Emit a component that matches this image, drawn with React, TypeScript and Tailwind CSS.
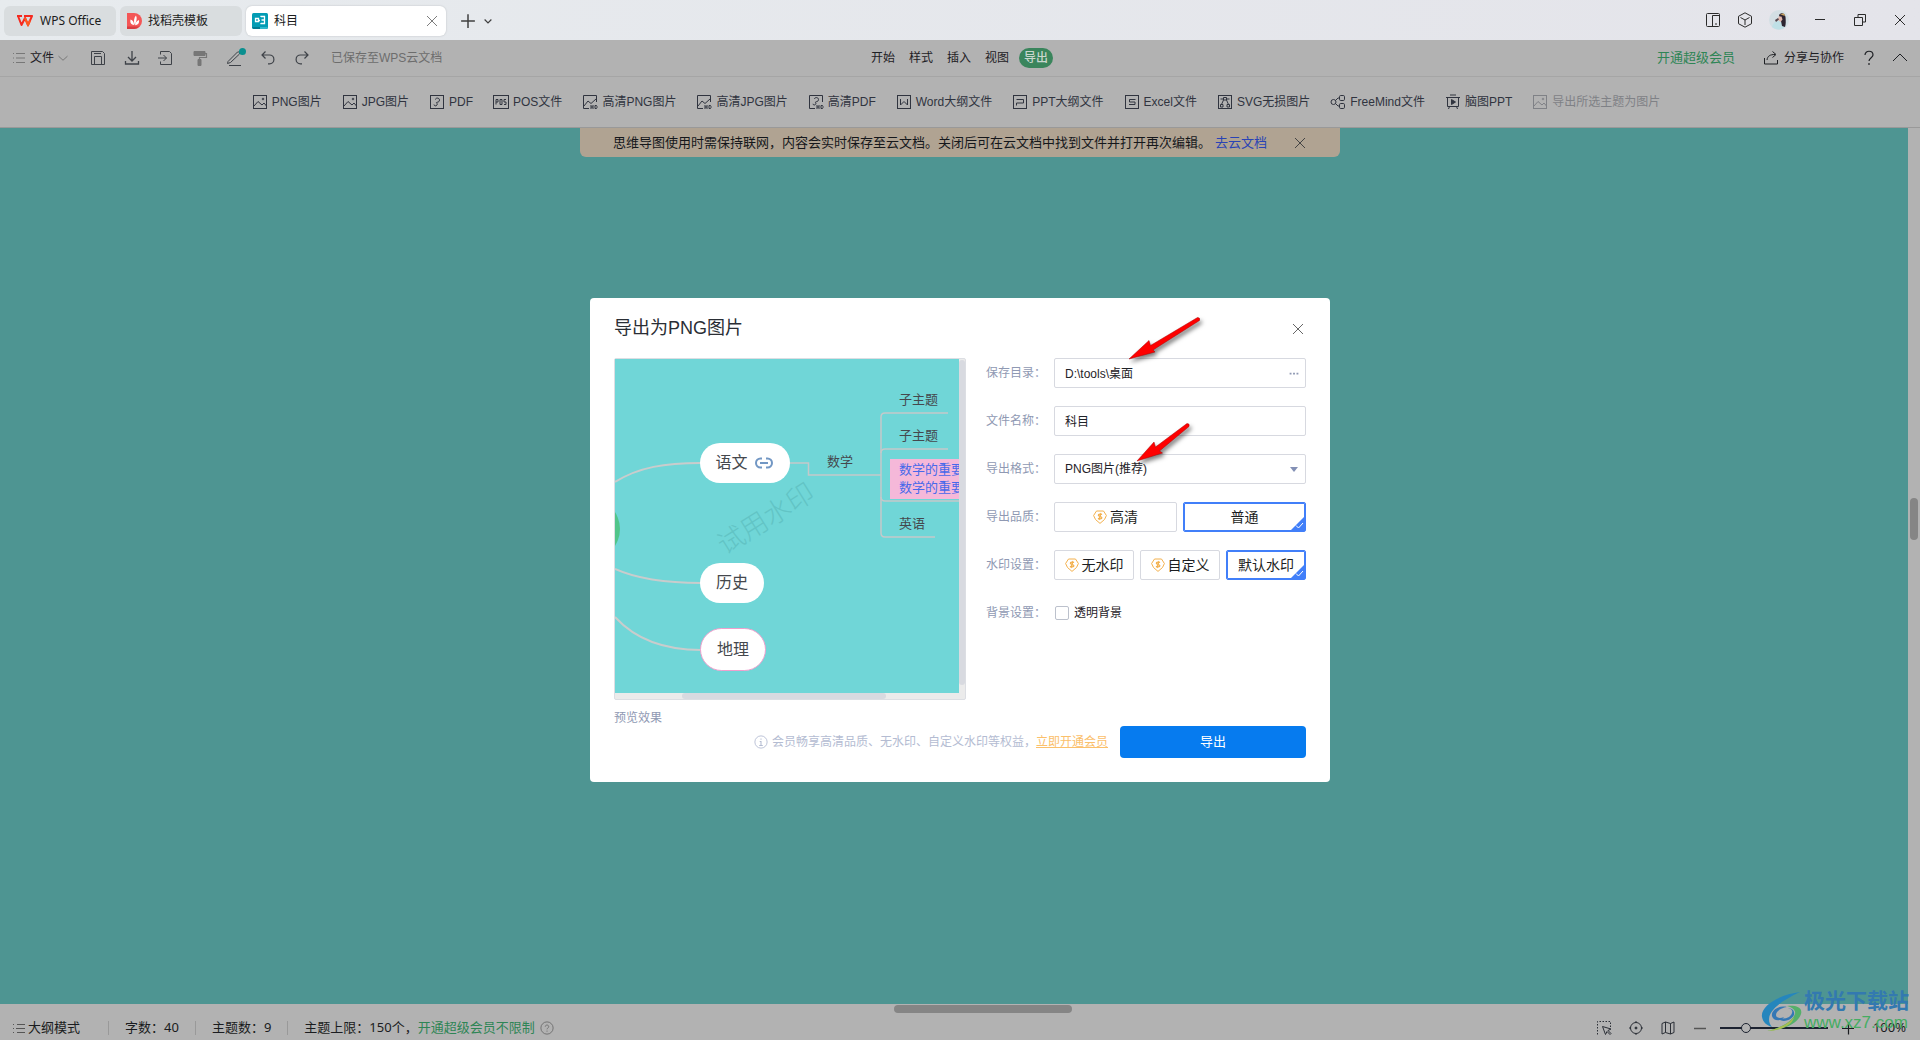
import React, { useState } from 'react';

interface IconProps {
  className?: string;
  size?: number;
  children: React.ReactNode;
}

const Icon: React.FC<IconProps> = ({ className = '', size = 16, children }) => (
  <svg
    width={size}
    height={size}
    viewBox="0 0 16 16"
    fill="none"
    stroke="currentColor"
    strokeWidth="1"
    className={`shrink-0 ${className}`}
    aria-hidden="true"
  >
    {children}
  </svg>
);

const Close: React.FC<{ className?: string }> = ({ className }) => (
  <Icon className={className}>
    <path d="M3 3l10 10M13 3L3 13" />
  </Icon>
);

// Toolbar glyphs
const glyphs: Record<string, React.ReactNode> = {
  image: (
    <>
      <rect x="1.5" y="1.5" width="13" height="13" />
      <path d="M2 12l4-4.500 4 3.500 2-2 2.500 3" />
      <circle cx="11" cy="5" r="0.8" />
    </>
  ),
  pdf: (
    <>
      <rect x="1.5" y="1.5" width="13" height="13" />
      <path d="M6.500 5.500c0-2 4-2 4 .5S8 8 7.500 8.500s1.500 1 .5 2.500-3 1-3-.5" />
    </>
  ),
  pos: (
    <>
      <rect x="0.500" y="1.500" width="15" height="13" />
      <path d="M3 10.500v-5h2v2.500H3M7 5.500h2v5H7zM13 5.500h-2V8h2v2.500h-2" />
    </>
  ),
  hd: (
    <>
      <path d="M7 14.500H1.500v-13h13V8" />
      <path d="M2 12l4-5 3 2.500L14 5" />
      <path d="M9 11v4M11 11v4M9 13h2M13 11.500v3h1.500l.5-1v-1l-.5-1z" />
    </>
  ),
  hdpdf: (
    <>
      <path d="M7 14.500H1.500v-13h13V8" />
      <path d="M6.500 5c0-2 4-2 4 .5S8 7.500 7.500 8s1 1 .2 2.200-2.700 1-2.700-.4" />
      <path d="M9 11v4M11 11v4M9 13h2M13 11.500v3h1.500l.5-1v-1l-.5-1z" />
    </>
  ),
  word: (
    <>
      <rect x="1.500" y="1.500" width="13" height="13" />
      <path d="M4.500 5v6L8 7.500l3.500 3.500V5" />
    </>
  ),
  ppt: (
    <>
      <rect x="1.500" y="1.500" width="13" height="13" />
      <path d="M4.500 11.500V9h7V5.500h-7" />
    </>
  ),
  excel: (
    <>
      <rect x="1.500" y="1.500" width="13" height="13" />
      <path d="M11.500 5.500h-6V8h5.500v2.500H5" />
    </>
  ),
  svg: (
    <>
      <rect x="1.500" y="1.500" width="13" height="13" />
      <path d="M6.500 3.500h3v2.500h-3zM3.500 10.500H6V13H3.500zM10 10.500h2.500V13H10zM6.500 6l-2 4.500M9.500 6l2 4.500M6 5H3.500M10 5h2.500" />
    </>
  ),
  freemind: (
    <>
      <circle cx="3.500" cy="8" r="2.500" />
      <rect x="9.500" y="1.500" width="5" height="5" rx="1.200" />
      <rect x="9.500" y="9.500" width="5" height="5" rx="1.200" />
      <path d="M9.500 4H8L5.500 6.500M5.500 9.500L8 12h1.500" />
    </>
  ),
  slides: (
    <>
      <path d="M5 1h6M1 3.500h14M2.500 3.500v9h11v-9M4.500 12.500l-1 2.500M11.500 12.500l1 2.500" />
      <path d="M6.500 5.500v5L10.500 8z" fill="currentColor" />
    </>
  ),
};

const exportItems = [
  { icon: 'image', label: 'PNG图片' },
  { icon: 'image', label: 'JPG图片' },
  { icon: 'pdf', label: 'PDF' },
  { icon: 'pos', label: 'POS文件' },
  { icon: 'hd', label: '高清PNG图片' },
  { icon: 'hd', label: '高清JPG图片' },
  { icon: 'hdpdf', label: '高清PDF' },
  { icon: 'word', label: 'Word大纲文件' },
  { icon: 'ppt', label: 'PPT大纲文件' },
  { icon: 'excel', label: 'Excel文件' },
  { icon: 'svg', label: 'SVG无损图片' },
  { icon: 'freemind', label: 'FreeMind文件' },
  { icon: 'slides', label: '脑图PPT' },
];

const TitleBar: React.FC = () => (
  <header className="flex h-10 items-center bg-linear-to-r from-[#e7ebee] to-[#e4e4ea] pl-1 font-['Noto_Sans','Noto_Sans_CJK_SC',sans-serif] text-xs text-[#1c1c1c]">
    <div className="flex gap-1 pt-0.5">
      <button className="flex h-[30px] w-[112px] items-center gap-[7px] rounded-md bg-[#d9dddf] pl-[13px]">
        <svg width="16" height="12" viewBox="0 0 16 12" fill="none" stroke="#f5291f" strokeWidth="2" aria-hidden="true">
          <path d="M0 1h5M1 1l3.500 9L8 3l3 7 4-9H7" strokeLinejoin="round" />
          <path d="M8 3l3 7 2-4.500" stroke="#ff5a1f" />
        </svg>
        WPS Office
      </button>
      <button className="flex h-[30px] w-[122px] items-center gap-[6px] rounded-md bg-[#d9dddf] pl-[7px]">
        <svg width="15" height="16" viewBox="0 0 15 16" aria-hidden="true">
          <path d="M0 0h7a8 8 0 0 1 0 16H0z" fill="#f45656" />
          <path d="M0 13.500h12.500A8 8 0 0 1 7 16H0z" fill="#d93c40" />
          <path d="M7 12C3.500 11.500 3 9 3.500 6.500 6 7.500 7 9 7 12zm.5 0C6.500 8 7 4.500 9 2.500c1.500 3 .5 6-1.500 9.500zm.5.200C8.500 9.500 10 7.500 12 7c.5 3-1 5-4 5.200z" fill="#fff" />
        </svg>
        找稻壳模板
      </button>
      <div className="flex h-[30px] w-[200px] items-center gap-[6px] rounded-md bg-white pr-[6px] pl-[6px] shadow-[0_0_2px_#b9bcc0]">
        <svg width="16" height="16" viewBox="0 0 16 16" fill="none" stroke="#fff" strokeWidth="1" aria-hidden="true">
          <rect width="16" height="16" rx="1.500" fill="#039cb4" stroke="none" />
          <path d="M0 14h8v2H1.500z" fill="#027b92" stroke="none" />
          <path d="M8 14h8l-1.500 2H8z" fill="#30b8cd" stroke="none" />
          <path d="M3.500 5.500h3v3h-3zM6.500 7.500H8M9 4V3.500h3.500v3.500H9.500M12.500 7v3.500H9V10" strokeWidth="1.300" />
        </svg>
        <span className="flex-1">科目</span>
        <button aria-label="关闭标签">
          <Close className="text-[#7d7d7d]" />
        </button>
      </div>
    </div>
    <div className="ml-3 flex items-center gap-1 pt-0.5 text-[#404040]">
      <button aria-label="新建">
        <Icon size={20}>
          <path d="M8 2.500v11M2.500 8h11" strokeWidth="1.200" />
        </Icon>
      </button>
      <button aria-label="标签列表">
        <Icon size={12}>
          <path d="M3.500 6l4.500 4.500L12.500 6" strokeWidth="1.600" />
        </Icon>
      </button>
    </div>
    <div className="ml-auto flex items-center pr-3 text-[#2b2b2b]">
      <button className="mr-4" aria-label="分屏">
        <Icon>
          <rect x="1.500" y="1.500" width="13" height="13" rx="1" />
          <path d="M7.500 14V3.500h7M10 12h2" />
        </Icon>
      </button>
      <button className="mr-4" aria-label="应用">
        <Icon>
          <path d="M8 .800l6.500 3.500v7.400L8 15.200l-6.500-3.500V4.300zM3.500 5.500L8 8l4.500-2.500M8 8v5" />
        </Icon>
      </button>
      <button className="mr-[23px]" aria-label="账户">
        <svg width="20" height="20" viewBox="0 0 20 20" aria-hidden="true">
          <circle cx="10" cy="10" r="10" fill="#d3dfe4" />
          <path d="M3 17c1-4 3-6 6-6l5 1 1 6c-3 2-9 2-12-1z" fill="#bfe0e6" />
          <path d="M10 5c2-3 6-2 6.500 2 .3 4 .5 7-.5 10l-3-1-1-5z" fill="#2c2430" />
          <path d="M9.500 6.500l3 0 1 3-2 2.500-2.500-2z" fill="#e3b9ad" />
          <path d="M6 10l3-2 1 1.500-3 2.500z" fill="#56484f" />
          <path d="M11 4l4-.5 1 2.500-3-1z" fill="#c9a25d" />
        </svg>
      </button>
      <button className="mr-6" aria-label="最小化">
        <Icon>
          <path d="M3 7.500h10" />
        </Icon>
      </button>
      <button className="mr-6" aria-label="还原">
        <Icon>
          <path d="M2.500 5.500h8v8h-8zM6 5V2.500h7.500V10H11" />
        </Icon>
      </button>
      <button aria-label="关闭">
        <Close />
      </button>
    </div>
  </header>
);

const MenuBar: React.FC = () => (
  <div className="grid h-[37px] grid-cols-[1fr_auto_1fr] items-center border-b border-[#a5a5a5] pr-3 pl-[11px] text-xs text-[#1e2024]">
    <div className="flex items-center text-[#3e4248]">
      <button className="mr-[21px] flex items-center gap-[3px] text-[#1e2024]">
        <Icon className="text-[#777]">
          <path d="M2 3.500h1M5 3.500h9M2 8h1M5 8h9M2 12.500h1M5 12.500h9" />
        </Icon>
        文件
        <Icon size={12} className="text-[#666]">
          <path d="M2 5.500l6 5.500 6-5.500" />
        </Icon>
      </button>
      <div className="mr-[21px] flex items-center gap-[18px]">
        <button aria-label="保存">
          <Icon>
            <path d="M1.500 1.500h11l2 2v11h-13zM4.500 14.500v-8h7v8M4 3.500h7" />
          </Icon>
        </button>
        <button aria-label="下载">
          <Icon>
            <path d="M8 1v9.500M4 7l4 4 4-4M1.500 11v3h13v-3" strokeWidth="1.300" />
          </Icon>
        </button>
        <button aria-label="导入">
          <Icon>
            <path d="M2.500 4.500v-3h9l2 2v11h-11v-3M0 8h8.500M5.500 5l3 3-3 3" />
          </Icon>
        </button>
        <button aria-label="格式刷" className="text-[#777]">
          <Icon>
            <path d="M12 3.500h2.500v4H7.500v2" strokeWidth="1.200" />
            <path d="M2 1.500h11v4H2zM6 9.500h3v6H6z" fill="currentColor" />
          </Icon>
        </button>
        <button aria-label="画笔" className="relative">
          <Icon>
            <path d="M2 11.500L11.500 2a1.500 1.500 0 0 1 2 2L4.500 12.500 1.500 13.500zM3 15.500h12" />
          </Icon>
          <span className="absolute -top-0.5 -right-1 size-[7px] rounded-full bg-[#0a8f8f]" />
        </button>
        <button aria-label="撤销">
          <Icon>
            <path d="M5.500 1.500L2 5l3.500 3.500M2 5h7.500a4.300 4.300 0 0 1 0 8.800H8" strokeWidth="1.200" />
          </Icon>
        </button>
        <button aria-label="重做">
          <Icon>
            <path d="M10.500 1.500L14 5l-3.500 3.500M14 5H6.500a4.300 4.300 0 0 0 0 8.800H8" strokeWidth="1.200" />
          </Icon>
        </button>
      </div>
      <span className="text-[#6d6d6d]">已保存至WPS云文档</span>
    </div>
    <nav className="flex items-center gap-[14px] pl-[5px]">
      <button>开始</button>
      <button>样式</button>
      <button>插入</button>
      <button>视图</button>
      <button className="-ml-1 h-5 rounded-full bg-[#3a855c] px-[5px] font-medium text-[#c9d6ce]">导出</button>
    </nav>
    <div className="flex items-center justify-end">
      <a href="#vip" className="mr-7 text-[13px] text-[#2e8555]">
        开通超级会员
      </a>
      <button className="mr-[17px] flex items-center gap-[5px]">
        <Icon>
          <path d="M1.500 8v6h13v-4M4 10c.5-4 3-5.500 8-5.500M9.500 1.500l3.500 3-3.500 3" />
        </Icon>
        分享与协作
      </button>
      <button className="mr-[15px]" aria-label="帮助">
        <Icon>
          <path d="M4 5c0-5 8-5 8 0 0 2.500-4 3-4 6M8 13v2" strokeWidth="1.200" />
        </Icon>
      </button>
      <button aria-label="收起">
        <Icon>
          <path d="M1 11l7-7 7 7" />
        </Icon>
      </button>
    </div>
  </div>
);

const ExportBar: React.FC = () => (
  <div className="flex h-[51px] items-center justify-center gap-5 border-b border-[#999] pr-2 text-xs whitespace-nowrap text-[#30343f]">
    {exportItems.map((item) => (
      <button key={item.label} className="flex items-center gap-1">
        <Icon>{glyphs[item.icon]}</Icon>
        {item.label}
      </button>
    ))}
    <button disabled className="flex items-center gap-1 text-[#7f8186]">
      <Icon>{glyphs.image}</Icon>
      导出所选主题为图片
    </button>
  </div>
);

const StatusBar: React.FC = () => (
  <footer className="bg-[#b2b2b2] font-['Noto_Sans','Noto_Sans_CJK_SC',sans-serif] text-[13px] text-[#1a1c20]">
    <div className="flex h-[10px] justify-center pt-px pl-[45px]">
      <div className="h-2 w-[178px] rounded bg-[#858585]" />
    </div>
    <div className="flex h-[26px] items-center pt-0.5 pr-[14px] pl-3">
      <button className="mr-7 flex items-center">
        <Icon className="text-[#555]">
          <path d="M1 4.500h1M5 4.500h8M1 8.500h1M4 8.500h9M1 12.500h1M5 12.500h8" />
        </Icon>
        大纲模式
      </button>
      <span className="h-3.5 w-px bg-[#999]" />
      <span className="mx-4">字数：40</span>
      <span className="h-3.5 w-px bg-[#999]" />
      <span className="mx-4">主题数：9</span>
      <span className="h-3.5 w-px bg-[#999]" />
      <span className="ml-4">主题上限：150个，</span>
      <a href="#vip" className="text-[#2e8555]">
        开通超级会员不限制
      </a>
      <Icon size={14} className="ml-[5px] text-[#6b6b6b]">
        <circle cx="8" cy="8" r="7" />
        <path d="M6 6.500c0-2.500 4-2.500 4 0C10 8 8 8 8 9.500M8 11v1.200" />
      </Icon>
      <div className="ml-auto flex items-center">
        <div className="flex gap-4 text-[#2b2f36]">
          <button aria-label="框选">
            <Icon>
              <path d="M1.500 14.500v-13h13v6" strokeDasharray="1.500 1.500" />
              <path d="M6.500 6.500l3 8 1.500-3 3 3 1-1-3-3 3-1.500z" />
            </Icon>
          </button>
          <button aria-label="定位">
            <Icon>
              <circle cx="8" cy="8" r="5.500" />
              <circle cx="8" cy="8" r="1" fill="currentColor" />
              <path d="M8 1v2M8 13v2M1 8h2M13 8h2" />
            </Icon>
          </button>
          <button aria-label="导航图">
            <Icon>
              <path d="M2 3.500l3.500-1.500 5 1.500L14 2v10.500L10.500 14l-5-1.500L2 14zM5.500 2v10.500M10.500 3.500V14" />
            </Icon>
          </button>
        </div>
        <button className="ml-4" aria-label="缩小">
          <Icon className="text-[#555]">
            <path d="M2 8.500h12" strokeWidth="1.500" />
          </Icon>
        </button>
        <input
          type="range"
          min="0"
          max="400"
          defaultValue="86"
          aria-label="缩放"
          className="mr-3 ml-3 h-3 w-[108px] appearance-none bg-linear-to-r from-[#1c2230] to-[#1c2230] bg-[length:100%_2px] bg-center bg-no-repeat [&::-webkit-slider-thumb]:size-[10px] [&::-webkit-slider-thumb]:appearance-none [&::-webkit-slider-thumb]:rounded-full [&::-webkit-slider-thumb]:border [&::-webkit-slider-thumb]:border-[#1c2230] [&::-webkit-slider-thumb]:bg-[#b2b2b2]"
        />
        <button className="mr-[17px]" aria-label="放大">
          <Icon>
            <path d="M2 8.500h12M8.500 2.500v12" strokeWidth="1.200" />
          </Icon>
        </button>
        100%
      </div>
    </div>
  </footer>
);

const Preview: React.FC = () => (
  <div className="grid h-[342px] w-[352px] grid-cols-[1fr_6px] grid-rows-[1fr_6px] rounded-xs border border-[#dcdee3] bg-[#ebebeb]">
    <div className="relative overflow-hidden bg-[#70d6d7] text-[13px] text-[#45484d]">
      <svg width="344" height="334" viewBox="0 0 344 334" fill="none" className="absolute inset-0" aria-hidden="true">
        <circle cx="-26" cy="170" r="31" fill="#51c58a" />
        <g stroke="#c9cccc" strokeWidth="2">
          <path d="M0 123C24 108 50 104 86 104" />
          <path d="M0 210C22 220 50 224 86 224" />
          <path d="M0 258C20 280 50 291 86 291" />
        </g>
        <g stroke="#c4c9ca" strokeWidth="1.500">
          <path d="M175 104h18.500v12H266" />
          <path d="M333 54h-63q-4 0-4 4v116q0 4 4 4h50" />
          <path d="M333 90h-63q-4 0-4 4M344 142h-74q-4 0-4-4" />
        </g>
      </svg>
      <div className="absolute top-[84px] left-[85px] flex h-10 w-[90px] items-center justify-center gap-[7px] rounded-full bg-white pr-0.5 text-base">
        语文
        <svg width="18" height="12" viewBox="0 0 18 12" fill="none" stroke="#7297c4" strokeWidth="2" aria-hidden="true">
          <path d="M7 1.500H5.500a4.500 4.500 0 0 0 0 9H7M11 1.500h1.500a4.500 4.500 0 0 1 0 9H11M5 6h8" />
        </svg>
      </div>
      <div className="absolute top-[204px] left-[85px] flex h-10 w-16 items-center justify-center rounded-full bg-white text-base">
        历史
      </div>
      <div className="absolute top-[269px] left-[85px] flex h-[43px] w-[66px] items-center justify-center rounded-full border border-[#ef9fcd] bg-white text-base">
        地理
      </div>
      <span className="absolute top-[94px] left-[212px] leading-[18px]">数学</span>
      <span className="absolute top-8 left-[284px] leading-[18px]">子主题</span>
      <span className="absolute top-[68px] left-[284px] leading-[18px]">子主题</span>
      <div className="absolute top-[100px] left-[275px] h-10 w-[140px] bg-[#f5b8d9] px-[9px] py-0.5 leading-[18px] text-[#4769ea]">
        数学的重要性
        <br />
        数学的重要性
      </div>
      <span className="absolute top-[156px] left-[284px] leading-[18px]">英语</span>
      <span className="absolute top-[142px] left-[97px] -rotate-32 text-[27px] leading-9 font-light text-[#62c4c5]">试用水印</span>
    </div>
    <div className="mt-px h-[325px] rounded-full bg-[#d8dae0]" />
    <div className="ml-[67px] w-[204px] rounded-full bg-[#d8dae0]" />
  </div>
);

const VipBadge: React.FC = () => (
  <svg width="14" height="14" viewBox="0 0 14 14" fill="none" stroke="#f3b04c" aria-hidden="true">
    <path d="M3.500 1h7L13.400 5.500 11.500 9.500 7 13.400 2.500 9.500.600 5.500z" strokeLinejoin="round" />
    <path d="M9 4.600C8 3.800 5.300 3.800 5.300 5.200S8.900 6.400 8.900 7.800 6 9.100 5 8.300M8 3L6 10" strokeWidth="1.200" />
  </svg>
);

interface OptionProps {
  name: string;
  label: string;
  vip?: boolean;
  checked: boolean;
  onSelect: (value: string) => void;
}

const Option: React.FC<OptionProps> = ({ name, label, vip, checked, onSelect }) => (
  <label
    className={`relative flex h-[30px] flex-1 cursor-pointer items-center justify-center gap-[3px] rounded-xs border text-sm text-[#1c1e22] ${
      checked ? 'border-[#417ff9] ring-1 ring-[#417ff9] ring-inset' : 'border-[#d7d9e0]'
    }`}
  >
    <input type="radio" name={name} className="sr-only" checked={checked} onChange={() => onSelect(label)} />
    {vip && <VipBadge />}
    {label}
    {checked && (
      <svg width="15" height="15" viewBox="0 0 15 15" className="absolute right-0 bottom-0" aria-hidden="true">
        <path d="M15 0v15H0z" fill="#417ff9" />
        <path d="M6 9.500l2.500 2.500L13 7" fill="none" stroke="#fff" />
      </svg>
    )}
  </label>
);

const Field: React.FC<{ label: string; htmlFor?: string; children: React.ReactNode }> = ({ label, htmlFor, children }) => (
  <div className="flex h-[30px] items-center">
    <label htmlFor={htmlFor} className="w-[68px] shrink-0 text-xs text-[#8f99b3]">
      {label}
    </label>
    <div className="relative flex flex-1 items-center gap-[6px]">{children}</div>
  </div>
);

const inputStyle = 'h-[30px] w-full appearance-none rounded-xs border border-[#d7d9e0] bg-white px-[10px] text-xs text-[#1f2329] outline-none';

const ExportDialog: React.FC = () => {
  const [folder, setFolder] = useState('D:\\tools\\桌面');
  const [fileName, setFileName] = useState('科目');
  const [quality, setQuality] = useState('普通');
  const [watermark, setWatermark] = useState('默认水印');

  return (
    <section role="dialog" aria-label="导出为PNG图片" className="relative w-[740px] rounded bg-white px-6 pt-[17px] pb-6">
      <div className="mb-4 flex items-center justify-between">
        <h2 className="text-lg leading-[27px] text-[#2a2e35]">导出为PNG图片</h2>
        <button aria-label="关闭对话框">
          <Close className="text-[#666]" />
        </button>
      </div>
      <div className="flex gap-5">
        <div>
          <Preview />
          <p className="mt-[9px] text-xs leading-[18px] text-[#8f99b3]">预览效果</p>
        </div>
        <div className="flex flex-1 flex-col gap-[18px]">
          <Field label="保存目录：" htmlFor="folder">
            <input
              id="folder"
              className={`${inputStyle} pb-0.5`}
              value={folder}
              onChange={(e) => setFolder(e.target.value)}
            />
            <button className="absolute right-[7px] text-[#8f99b3]" aria-label="浏览">
              <Icon size={10}>
                <path d="M1 9h3M6.500 9h3M12 9h3" strokeWidth="3" />
              </Icon>
            </button>
          </Field>
          <Field label="文件名称：" htmlFor="filename">
            <input
              id="filename"
              className={`${inputStyle} pb-0.5`}
              value={fileName}
              onChange={(e) => setFileName(e.target.value)}
            />
          </Field>
          <Field label="导出格式：" htmlFor="format">
            <select id="format" className={inputStyle}>
              <option>PNG图片(推荐)</option>
            </select>
            <svg width="8" height="5" viewBox="0 0 8 5" className="pointer-events-none absolute right-2" aria-hidden="true">
              <path d="M0 0h8L4 5z" fill="#8390b5" />
            </svg>
          </Field>
          <Field label="导出品质：">
            <Option name="quality" label="高清" vip checked={quality === '高清'} onSelect={setQuality} />
            <Option name="quality" label="普通" checked={quality === '普通'} onSelect={setQuality} />
          </Field>
          <Field label="水印设置：">
            <Option name="watermark" label="无水印" vip checked={watermark === '无水印'} onSelect={setWatermark} />
            <Option name="watermark" label="自定义" vip checked={watermark === '自定义'} onSelect={setWatermark} />
            <Option name="watermark" label="默认水印" checked={watermark === '默认水印'} onSelect={setWatermark} />
          </Field>
          <Field label="背景设置：" htmlFor="transparent">
            <input
              id="transparent"
              type="checkbox"
              className="ml-px size-[14px] appearance-none rounded-xs border border-[#bcc1cc] bg-white checked:bg-[#417ff9]"
            />
            <label htmlFor="transparent" className="-ml-px text-xs text-[#1f2329]">
              透明背景
            </label>
          </Field>
        </div>
      </div>
      <div className="-mt-px flex items-center justify-end text-xs text-[#b4bcd2]">
        <Icon size={14} className="mr-1">
          <circle cx="8" cy="8" r="7" />
          <path d="M8 4v1.500M6.500 7.500H8V12M6 12h4" strokeWidth="1.200" />
        </Icon>
        会员畅享高清品质、无水印、自定义水印等权益，
        <a href="#vip" className="text-[#fbc06b] underline">
          立即开通会员
        </a>
        <button className="ml-3 h-8 w-[186px] rounded bg-[#067bef] text-[13px] text-white">导出</button>
      </div>

      {/* Pointer arrows above the form */}
      <svg
        width="90"
        height="160"
        viewBox="0 0 90 160"
        className="pointer-events-none absolute top-[10px] left-[534px] drop-shadow-[2px_3px_2px_rgba(0,0,0,0.5)]"
        aria-hidden="true"
      >
        <g fill="#fe0000" stroke="#a80000" strokeWidth="0.500">
          <path d="M5 51l20-18.500 1.500 5L73.500 9.500q3 0 2 3L29 42l2 2z" />
          <path d="M13 153l17-19 1.500 5L63 115.500q3 0 2 3L35.500 143l3 2z" />
        </g>
      </svg>
    </section>
  );
};

const SiteMark: React.FC = () => (
  <div className="pointer-events-none absolute right-[10px] bottom-[5px] flex items-center">
    <svg width="44" height="42" viewBox="0 0 44 42" aria-hidden="true">
      <path d="M40 1C22 3 0 14 2 26c1 5 4 8 10 10C4 26 12 14 40 1z" fill="#2586bd" />
      <path d="M27 16c-8-2-16 3-15 9 1 5 9 6 12 1-4 2-8 1-8-2 0-4 5-7 11-8z" fill="#3478b5" />
      <path d="M28 17c6 1 5 6 1 9-4 2-8 2-12 0 3 6 13 5 17-2 1-4-2-7-6-7z" fill="#3478b5" />
      <path d="M27 15c8-1 16 1 14 8-3 10-18 16-34 17 13-3 25-9 28-17 1-4-3-7-8-8z" fill="#55b06a" />
      <path d="M7 40c13-3 23-8 27-14-1 8-14 14-27 14z" fill="#a9bd50" />
    </svg>
    <div className="w-[106px] whitespace-nowrap">
      <div className="text-[21px] leading-6 font-bold text-[#3379b0]">极光下载站</div>
      <div className="pb-0.5 text-[17px] leading-5 font-medium text-[#45ad62]">www.xz7.com</div>
    </div>
  </div>
);

const App: React.FC = () => (
  <div className="flex min-h-screen flex-col bg-[#b2b2b2] font-['Liberation_Sans','Noto_Sans_CJK_SC',sans-serif]">
    <TitleBar />
    <div className="relative flex flex-1 flex-col">
      <MenuBar />
      <ExportBar />
      <main className="flex flex-1">
        <div className="flex-1 bg-[#4e9592] pl-3">
          <div className="mx-auto flex h-[29px] w-[760px] items-center rounded-b-md bg-[#b0a392] pr-8 pl-[33px] text-[13px] text-[#15171b]">
            思维导图使用时需保持联网，内容会实时保存至云文档。关闭后可在云文档中找到文件并打开再次编辑。
            <a href="#cloud" className="ml-1 whitespace-nowrap text-[#2943b5]">
              去云文档
            </a>
            <button className="ml-auto" aria-label="关闭提示">
              <Close className="text-[#444]" />
            </button>
          </div>
        </div>
        <div className="flex w-3 flex-col justify-center">
          <div className="mx-auto mb-[94px] h-[42px] w-2 rounded bg-[#858585]" />
        </div>
      </main>
      <StatusBar />

      <div className="absolute inset-0 flex items-center justify-center">
        <ExportDialog />
      </div>
      <SiteMark />
    </div>
  </div>
);

export default App;
